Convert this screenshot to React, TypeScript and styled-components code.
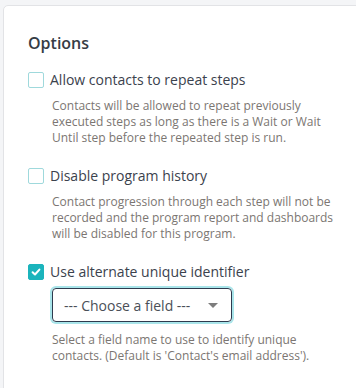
import React, { useState } from 'react';
import styled, { createGlobalStyle } from 'styled-components';

const GlobalStyle = createGlobalStyle`
  html, body {
    margin: 0;
    padding: 0;
    background: #f4f5f7;
    overflow: hidden;
  }
  body {
    font-family: 'Open Sans', 'Liberation Sans', sans-serif;
  }
`;

const Card = styled.section`
  margin: 5px 0 0 3px;
  width: 400px;
  min-height: 420px;
  background: #ffffff;
  border: 1px solid #e2e3e6;
  border-radius: 5px 0 0 0;
  padding: 26px 24px 0 24px;
  box-sizing: border-box;
`;

const Heading = styled.h2`
  margin: 0 0 16px 0;
  font-size: 16px;
  font-weight: 600;
  color: #363c45;
  line-height: 22px;
`;

const OptionList = styled.div`
  display: flex;
  flex-direction: column;
  gap: 20px;
`;

const Option = styled.div`
  display: flex;
  flex-direction: column;
`;

const CheckRow = styled.label`
  display: flex;
  align-items: center;
  gap: 6px;
  height: 20px;
  cursor: pointer;
`;

const Box = styled.span<{ $checked: boolean }>`
  width: 16px;
  height: 16px;
  box-sizing: border-box;
  border-radius: 2px;
  flex-shrink: 0;
  display: flex;
  align-items: center;
  justify-content: center;
  border: 1px solid ${(p) => (p.$checked ? '#1bb4bc' : '#9fd9dc')};
  background: ${(p) => (p.$checked ? '#1bb4bc' : '#ffffff')};
`;

const Label = styled.span`
  font-size: 14px;
  color: #3b424d;
  line-height: 20px;
`;

const Body = styled.div`
  padding-left: 24px;
  width: 290px;
  display: flex;
  flex-direction: column;
`;

const Description = styled.p<{ $afterSelect?: boolean }>`
  margin: ${(p) => (p.$afterSelect ? '10px' : '8px')} 0 0 0;
  font-size: 12px;
  line-height: 16px;
  color: #7b7672;
`;

const SelectBox = styled.div`
  margin-top: 6px;
  width: 180px;
  height: 34px;
  box-sizing: border-box;
  border: 1px solid #2e3b4e;
  border-radius: 4px;
  box-shadow: 0 0 0 2px #a9e5ea;
  display: flex;
  align-items: center;
  justify-content: space-between;
  padding: 0 13px 0 11px;
  font-size: 14px;
  color: #4a4f57;
`;

const Caret = styled.span`
  width: 0;
  height: 0;
  border-left: 5px solid transparent;
  border-right: 5px solid transparent;
  border-top: 5px solid #7d7d7d;
`;

const Check = () => (
  <svg width="10" height="10" viewBox="0 0 10 10">
    <path d="M1.6 5.2 L4 7.5 L8.4 2.6" fill="none" stroke="#ffffff" strokeWidth="2" strokeLinecap="round" strokeLinejoin="round" />
  </svg>
);

type Opt = { label: string; text: string; checked: boolean; select?: boolean };

const options: Opt[] = [
  {
    label: 'Allow contacts to repeat steps',
    text: 'Contacts will be allowed to repeat previously executed steps as long as there is a Wait or Wait Until step before the repeated step is run.',
    checked: false,
  },
  {
    label: 'Disable program history',
    text: 'Contact progression through each step will not be recorded and the program report and dashboards will be disabled for this program.',
    checked: false,
  },
  {
    label: 'Use alternate unique identifier',
    text: "Select a field name to use to identify unique contacts. (Default is 'Contact's email address').",
    checked: true,
    select: true,
  },
];

export default function App() {
  const [state, setState] = useState(options.map((o) => o.checked));

  return (
    <>
      <GlobalStyle />
      <Card>
        <Heading>Options</Heading>
        <OptionList>
          {options.map((o, i) => (
            <Option key={o.label}>
              <CheckRow onClick={() => setState(state.map((v, j) => (j === i ? !v : v)))}>
                <Box $checked={state[i]}>{state[i] && <Check />}</Box>
                <Label>{o.label}</Label>
              </CheckRow>
              <Body>
                {o.select && (
                  <SelectBox>
                    <span>--- Choose a field ---</span>
                    <Caret />
                  </SelectBox>
                )}
                <Description $afterSelect={o.select}>{o.text}</Description>
              </Body>
            </Option>
          ))}
        </OptionList>
      </Card>
    </>
  );
}
